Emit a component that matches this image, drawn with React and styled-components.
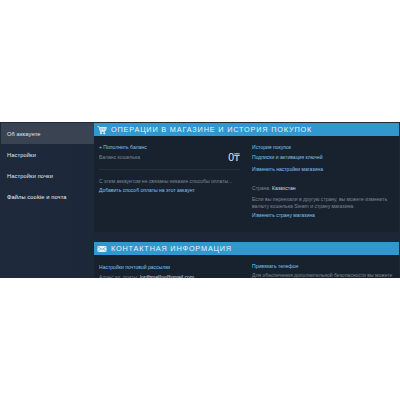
import styled, { createGlobalStyle } from "styled-components"

const GlobalStyle = createGlobalStyle`
    html, body{
        margin: 0;
        background-color: #fff;
    }
`

const Page = styled.div`
    margin-top: 122px;
    width: 400px;
    height: 156px;
    overflow: hidden;
    display: flex;
    flex-direction: row;
    background-color: #1b2636;
    font-family: "Liberation Sans", Arial, sans-serif;
    font-size: 5.05px;
    border-top: 1px solid #232a36;
    box-sizing: border-box;
`

const Sidebar = styled.nav`
    width: 94px;
    flex-shrink: 0;
    padding-left: 1px;
    box-sizing: border-box;
    background: linear-gradient(to right, #1e2a3c, #1c2738);
`

const NavItem = styled.div`
    height: 21px;
    padding-left: 6px;
    display: flex;
    align-items: center;
    color: #e4e8ee;
    font-size: 5.7px;
    letter-spacing: 0.12px;
    background-color: ${({ $active }) => ($active ? "#3a4352" : "transparent")};

    &:last-child{
        color: #f2f4f7;
    }
`

const Main = styled.main`
    flex: 1;
    padding-right: 1px;
    display: flex;
    flex-direction: column;
    gap: 10px;
`

const Header = styled.div`
    height: 13px;
    padding-left: 3px;
    display: flex;
    flex-direction: row;
    align-items: center;
    gap: 4px;
    background-color: #3097cf;
    color: #e8f4fb;
    font-size: 7.3px;
    letter-spacing: 0.82px;
    white-space: nowrap;

    svg{
        width: 10px;
        height: 10px;
        flex-shrink: 0;
    }
`

const Panel = styled.section`
    height: ${({ $height }) => $height}px;
    padding: ${({ $top }) => $top}px 4px 0 5px;
    box-sizing: border-box;
    display: grid;
    grid-template-columns: 141px 1fr;
    column-gap: 12px;
    background-color: #18212e;
`

const Column = styled.div`
    display: flex;
    flex-direction: column;
    min-width: 0;
`

const Line = styled.div`
    height: ${({ $height }) => $height || 10}px;
    margin-top: ${({ $top }) => $top || 0}px;
    line-height: ${({ $height }) => $height || 10}px;
    color: ${({ $link }) => ($link ? "#7fc4ee" : "#7d8794")};
    white-space: nowrap;
`

const Strong = styled.span`
    color: #d5dae1;
`

const BalanceRow = styled.div`
    display: flex;
    flex-direction: row;
    justify-content: space-between;
    align-items: center;
    height: 10px;
    color: #7d8794;
`

const Balance = styled.span`
    color: #e6e9ee;
    font-size: 10.5px;
    line-height: 10px;
`

const Divider = styled.div`
    height: 1px;
    margin: 7px 0 6px;
    background-color: #242e3c;
`

const CartIcon = () => (
    <svg viewBox="0 0 20 20" fill="none" stroke="#e8f4fb" strokeWidth="1.6">
        <path d="M1 3h3l2.5 10h9.5" />
        <path d="M5 5h14l-2 6H6.5" fill="#e8f4fb" fillOpacity="0.55" />
        <path d="M8 5v6M11.5 5v6M15 5v6" strokeWidth="1" />
        <circle cx="8" cy="16.5" r="1.5" fill="#e8f4fb" />
        <circle cx="14.5" cy="16.5" r="1.5" fill="#e8f4fb" />
    </svg>
)

const MailIcon = () => (
    <svg viewBox="0 0 20 20" fill="#e8f4fb">
        <path d="M1 4h18v12H1z" />
        <path d="M1 5l9 6 9-6M1 16l6-6M19 16l-6-6" fill="none" stroke="#3097cf" strokeWidth="1.2" />
    </svg>
)

const App = () => {
    return(
        <>
            <GlobalStyle />
            <Page>
                <Sidebar>
                    <NavItem $active>Об аккаунте</NavItem>
                    <NavItem>Настройки</NavItem>
                    <NavItem>Настройки почки</NavItem>
                    <NavItem>Файлы cookie и почта</NavItem>
                </Sidebar>
                <Main>
                    <div>
                        <Header><CartIcon />ОПЕРАЦИИ В МАГАЗИНЕ И ИСТОРИЯ ПОКУПОК</Header>
                        <Panel $height={96} $top={6}>
                            <Column>
                                <Line $link>+ Пополнить баланс</Line>
                                <BalanceRow>
                                    <span>Баланс кошелька</span>
                                    <Balance>0₸</Balance>
                                </BalanceRow>
                                <Divider />
                                <Line>С этим аккаунтом не связаны никакие способы оплаты...</Line>
                                <Line $link $height={9}>Добавить способ оплаты на этот аккаунт</Line>
                            </Column>
                            <Column>
                                <Line $link>История покупок</Line>
                                <Line $link>Подписки и активация ключей</Line>
                                <Line $link $top={2}>Изменить настройки магазина</Line>
                                <Line $top={9}>Страна: <Strong>Казахстан</Strong></Line>
                                <Line $top={2} $height={8}>Если вы переехали в другую страну, вы можете изменить</Line>
                                <Line $height={7}>валюту кошелька Steam и страну магазина.</Line>
                                <Line $link $top={1} $height={9}>Изменить страну магазина</Line>
                            </Column>
                        </Panel>
                    </div>
                    <div>
                        <Header><MailIcon />КОНТАКТНАЯ ИНФОРМАЦИЯ</Header>
                        <Panel $height={40} $top={7}>
                            <Column>
                                <Line $link>Настройки почтовой рассылки</Line>
                                <Line>Адрес эл. почты: <Strong>lordhmalfoy@gmail.com</Strong></Line>
                            </Column>
                            <Column>
                                <Line $link $height={9}>Привязать телефон</Line>
                                <Line $height={9}>Для обеспечения дополнительной безопасности вы можете</Line>
                            </Column>
                        </Panel>
                    </div>
                </Main>
            </Page>
        </>
    )
}

export default App
